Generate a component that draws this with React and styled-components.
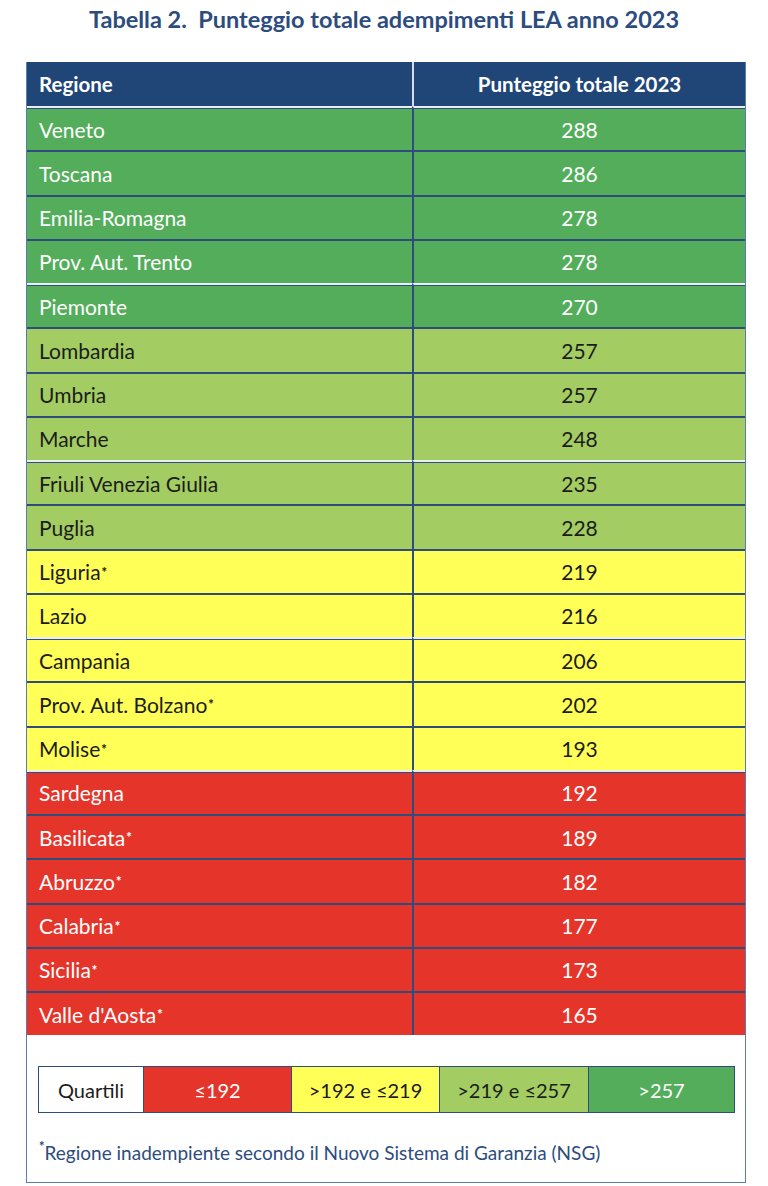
import React from 'react';
import styled, { createGlobalStyle } from 'styled-components';

const Global = createGlobalStyle`
  body {
    margin: 0;
    background: #ffffff;
    font-family: Lato, "Open Sans", "Liberation Sans", sans-serif;
  }
`;

const palette = {
  dark: { bg: '#53ad5b', fg: '#ffffff' },
  light: { bg: '#a3cd62', fg: '#1c1c1c' },
  yellow: { bg: '#ffff57', fg: '#1c1c1c' },
  red: { bg: '#e5342a', fg: '#ffffff' },
};

const rows = [
  ['Veneto', 288, 'dark', false, true],
  ['Toscana', 286, 'dark', false, false],
  ['Emilia-Romagna', 278, 'dark', false, false],
  ['Prov. Aut. Trento', 278, 'dark', false, false],
  ['Piemonte', 270, 'dark', false, true],
  ['Lombardia', 257, 'light', false, false],
  ['Umbria', 257, 'light', false, false],
  ['Marche', 248, 'light', false, false],
  ['Friuli Venezia Giulia', 235, 'light', false, true],
  ['Puglia', 228, 'light', false, false],
  ['Liguria', 219, 'yellow', true, false],
  ['Lazio', 216, 'yellow', false, false],
  ['Campania', 206, 'yellow', false, true],
  ['Prov. Aut. Bolzano', 202, 'yellow', true, false],
  ['Molise', 193, 'yellow', true, false],
  ['Sardegna', 192, 'red', false, true],
  ['Basilicata', 189, 'red', true, false],
  ['Abruzzo', 182, 'red', true, false],
  ['Calabria', 177, 'red', true, false],
  ['Sicilia', 173, 'red', true, false],
  ["Valle d'Aosta", 165, 'red', true, false],
];

const legend = [
  ['≤192', 'red'],
  ['>192 e ≤219', 'yellow'],
  ['>219 e ≤257', 'light'],
  ['>257', 'dark'],
];

const Page = styled.div`
  width: 768px;
  padding-top: 4px;
`;

const Title = styled.h1`
  margin: 0 0 28px;
  text-align: center;
  font-size: 23.5px;
  font-weight: 700;
  color: #2c4c7e;
  line-height: 30px;
`;

const Frame = styled.div`
  margin-left: 26px;
  width: 718px;
  height: 1120px;
  border: 1.5px solid #5c7cad;
  border-top: none;
  display: flex;
  flex-direction: column;
`;

const Grid = styled.div`
  display: grid;
  grid-template-columns: 385px 1fr;
`;

const Head = styled.div`
  background: #1f4677;
  color: #ffffff;
  font-weight: 700;
  font-size: 20.5px;
  height: 44px;
  display: flex;
  align-items: center;
  justify-content: ${p => (p.$center ? 'center' : 'flex-start')};
  padding-left: ${p => (p.$center ? '0' : '12px')};
  border-left: ${p => (p.$center ? '2px solid #d3dcea' : 'none')};
`;

const Cell = styled.div`
  height: 42.25px;
  background: ${p => palette[p.$tone].bg};
  color: ${p => palette[p.$tone].fg};
  font-size: 21px;
  display: flex;
  align-items: center;
  justify-content: ${p => (p.$center ? 'center' : 'flex-start')};
  padding-left: ${p => (p.$center ? '0' : '12px')};
  border-left: ${p => (p.$center ? '2px solid #2f4d7c' : 'none')};
  border-top: 2px solid ${p => (p.$sheen ? '#e9eef5' : '#2f4d7c')};
  box-shadow: ${p => (p.$sheen ? 'inset 0 1px 0 #2f4d7c' : 'none')};
`;

const Sup = styled.sup`
  font-size: 13px;
  font-weight: 900;
  margin-left: 1px;
  vertical-align: 9px;
  line-height: 0;
`;

const Legend = styled.div`
  margin: 31px 0 0 11px;
  width: 697px;
  height: 47px;
  display: grid;
  grid-template-columns: 104px 148px 148px 149px 1fr;
  border: 1.5px solid #2f4d7c;
  box-sizing: border-box;
`;

const Key = styled.div`
  display: flex;
  align-items: center;
  justify-content: center;
  font-size: 20px;
  background: ${p => (p.$tone ? palette[p.$tone].bg : '#ffffff')};
  color: ${p => (p.$tone ? palette[p.$tone].fg : '#1c1c1c')};
  border-left: ${p => (p.$tone ? '1.5px solid #2f4d7c' : 'none')};
`;

const Note = styled.p`
  margin: 28px 0 0 11px;
  font-size: 19px;
  color: #2c4c7e;
`;

export default function App() {
  return (
    <Page>
      <Global />
      <Title>Tabella 2.&nbsp; Punteggio totale adempimenti LEA anno 2023</Title>
      <Frame>
        <Grid>
          <Head>Regione</Head>
          <Head $center>Punteggio totale 2023</Head>
          {rows.map(([name, score, tone, flag, sheen]) => (
            <React.Fragment key={name}>
              <Cell $tone={tone} $sheen={sheen}>
                {name}
                {flag && <Sup>*</Sup>}
              </Cell>
              <Cell $tone={tone} $sheen={sheen} $center>{score}</Cell>
            </React.Fragment>
          ))}
        </Grid>
        <Legend>
          <Key>Quartili</Key>
          {legend.map(([label, tone]) => (
            <Key key={label} $tone={tone}>{label}</Key>
          ))}
        </Legend>
        <Note><Sup>*</Sup>Regione inadempiente secondo il Nuovo Sistema di Garanzia (NSG)</Note>
      </Frame>
    </Page>
  );
}
